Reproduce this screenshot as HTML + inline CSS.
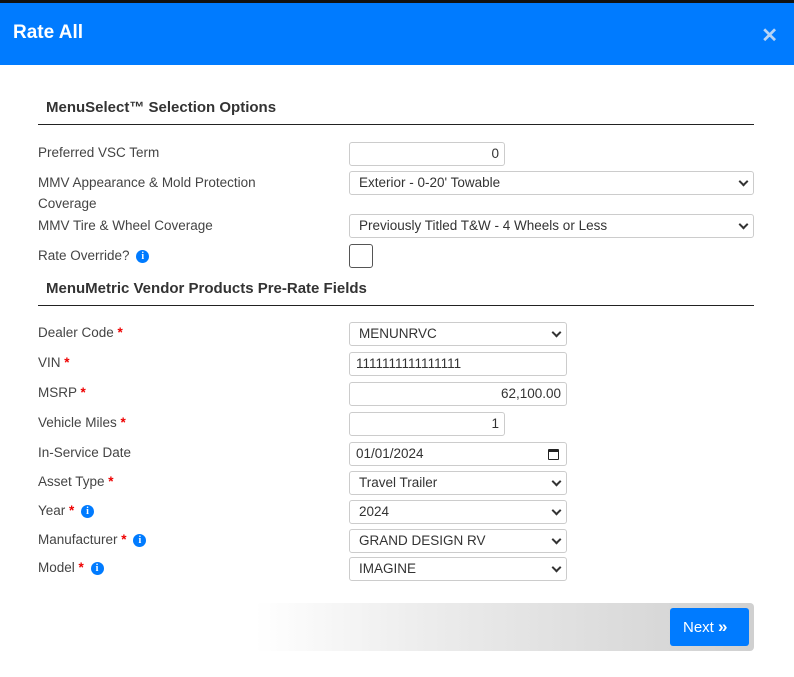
<!DOCTYPE html>
<html><head><meta charset="utf-8"><style>
*{box-sizing:border-box;margin:0;padding:0}
body{width:794px;height:677px;background:#fff;position:relative;overflow:hidden;font-family:"Liberation Sans",sans-serif;color:#444;font-size:14px}
.a{position:absolute}
.top{left:0;top:0;width:794px;height:3px;background:#111}
.hdr{left:0;top:3px;width:794px;height:62px;background:#007bff;color:#fff}
.hdr .t{position:absolute;left:13px;top:19px;font-size:19px;font-weight:bold}
.hdr .x{position:absolute;right:16px;top:20px;font-size:20px;font-weight:bold;color:#b8d4f5}
.h{left:46px;font-size:15px;font-weight:bold;color:#333}
.ln{left:38px;width:716px;height:1px;background:#222}
.l{left:38px;font-size:13.5px;color:#444;line-height:21px}
.st{color:#e00;font-weight:bold}
.i{display:inline-block;width:13px;height:13px;border-radius:50%;background:#007bff;color:#fff;font-size:10px;font-weight:bold;text-align:center;line-height:13px;vertical-align:1px;font-family:"Liberation Serif",serif;margin-left:3px}
.f{left:349px;height:24px;border:1px solid #ccc;border-radius:3px;font-size:13.5px;color:#333;line-height:22px;padding:0 9px;background:#fff}
.r{text-align:right;padding-right:5px}
.s::after{content:"";position:absolute;right:6px;top:6px;width:5px;height:5px;border-right:2px solid #333;border-bottom:2px solid #333;transform:rotate(45deg)}
.bar{left:255px;top:603px;width:499px;height:48px;border-radius:0 4px 4px 0;background:linear-gradient(90deg,#fff 0%,#ececec 35%,#d0d0d0 100%)}
.btn{left:670px;top:608px;width:79px;height:38px;background:#007bff;border-radius:3px;color:#fff;font-size:15px;line-height:38px;padding-left:13px}
</style></head><body>
<div class="a top"></div>
<div class="a hdr"><div class="t">Rate All</div><div class="x">✕</div></div>
<div class="a h" style="top:99px">MenuSelect™ Selection Options</div>
<div class="a ln" style="top:124px"></div>
<div class="a l" style="top:142px">Preferred VSC Term</div>
<div class="a f r" style="top:142px;width:156px">0</div>
<div class="a l" style="top:172px">MMV Appearance &amp; Mold Protection<br>Coverage</div>
<div class="a f s" style="top:171px;width:405px">Exterior - 0-20' Towable</div>
<div class="a l" style="top:215px">MMV Tire &amp; Wheel Coverage</div>
<div class="a f s" style="top:214px;width:405px">Previously Titled T&amp;W - 4 Wheels or Less</div>
<div class="a l" style="top:245px">Rate Override? <span class="i">i</span></div>
<div class="a" style="left:349px;top:244px;width:24px;height:24px;border:1px solid #555;border-radius:3px"></div>
<div class="a h" style="top:280px">MenuMetric Vendor Products Pre-Rate Fields</div>
<div class="a ln" style="top:305px"></div>
<div class="a l" style="top:322px">Dealer Code <span class="st">*</span></div>
<div class="a f s" style="top:322px;width:218px">MENUNRVC</div>
<div class="a l" style="top:352px">VIN <span class="st">*</span></div>
<div class="a f" style="top:352px;width:218px;padding-left:6px">1111111111111111</div>
<div class="a l" style="top:382px">MSRP <span class="st">*</span></div>
<div class="a f r" style="top:382px;width:218px">62,100.00</div>
<div class="a l" style="top:412px">Vehicle Miles <span class="st">*</span></div>
<div class="a f r" style="top:412px;width:156px">1</div>
<div class="a l" style="top:442px">In-Service Date</div>
<div class="a f" style="top:442px;width:218px;padding-left:6px">01/01/2024<span style="position:absolute;right:7px;top:6px;width:11px;height:11px;border:1.5px solid #222;border-top-width:3px;border-radius:1px"></span></div>
<div class="a l" style="top:471px">Asset Type <span class="st">*</span></div>
<div class="a f s" style="top:471px;width:218px">Travel Trailer</div>
<div class="a l" style="top:500px">Year <span class="st">*</span> <span class="i">i</span></div>
<div class="a f s" style="top:500px;width:218px">2024</div>
<div class="a l" style="top:529px">Manufacturer <span class="st">*</span> <span class="i">i</span></div>
<div class="a f s" style="top:529px;width:218px">GRAND DESIGN RV</div>
<div class="a l" style="top:557px">Model <span class="st">*</span> <span class="i">i</span></div>
<div class="a f s" style="top:557px;width:218px">IMAGINE</div>
<div class="a bar"></div>
<div class="a btn">Next <b style="font-size:17px">»</b></div>
</body></html>
